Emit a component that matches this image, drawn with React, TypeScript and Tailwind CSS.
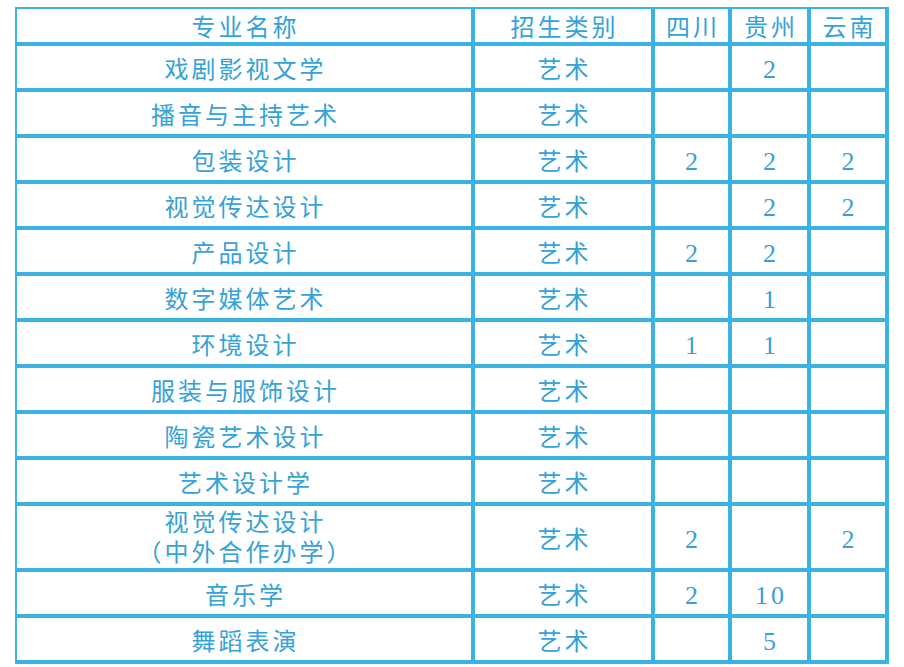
import React from 'react';

type Row = {
  name: string[];
  sc?: string;
  gz?: string;
  yn?: string;
  tall?: boolean;
};

const rows: Row[] = [
  { name: ['戏剧影视文学'], gz: '2' },
  { name: ['播音与主持艺术'] },
  { name: ['包装设计'], sc: '2', gz: '2', yn: '2' },
  { name: ['视觉传达设计'], gz: '2', yn: '2' },
  { name: ['产品设计'], sc: '2', gz: '2' },
  { name: ['数字媒体艺术'], gz: '1' },
  { name: ['环境设计'], sc: '1', gz: '1' },
  { name: ['服装与服饰设计'] },
  { name: ['陶瓷艺术设计'] },
  { name: ['艺术设计学'] },
  { name: ['视觉传达设计', '（中外合作办学）'], sc: '2', yn: '2', tall: true },
  { name: ['音乐学'], sc: '2', gz: '10' },
  { name: ['舞蹈表演'], gz: '5' },
];

const base = 'border-r-4 border-b-4 border-[#3ab2e4] text-center align-middle pb-0 pl-[3px] pr-0';
const cell = base + ' pt-[5px]';

const App = () => {
  return (
    <div className="bg-white w-[904px] h-[667px] pt-[7px] pl-[15px] font-['Liberation_Serif','Noto_Sans_CJK_SC',serif] text-[#35a2d8] text-[24px] tracking-[3px]">
      <table className="border-separate border-spacing-0 border-l-2 border-t-2 border-[#3ab2e4] table-fixed">
        <colgroup>
          <col className="w-[458px]" />
          <col className="w-[180px]" />
          <col className="w-[77px]" />
          <col className="w-[79px]" />
          <col className="w-[78px]" />
        </colgroup>
        <thead>
          <tr className="h-[37px]">
            <th className={cell + ' font-normal leading-none'}>专业名称</th>
            <th className={cell + ' font-normal leading-none'}>招生类别</th>
            <th className={cell + ' font-normal leading-none'}>四川</th>
            <th className={cell + ' font-normal leading-none'}>贵州</th>
            <th className={cell + ' font-normal leading-none'}>云南</th>
          </tr>
        </thead>
        <tbody>
          {rows.map((r, i) => (
            <tr key={i} className={r.tall ? 'h-[66px]' : 'h-[46px]'}>
              <td className={r.tall ? base + ' pt-[2px] leading-[30px]' : cell + ' leading-none'}>
                {r.name.map((line, j) => (
                  <div key={j}>{line}</div>
                ))}
              </td>
              <td className={cell + ' leading-none'}>艺术</td>
              <td className={cell + ' leading-none text-[26px]'}>{r.sc}</td>
              <td className={cell + ' leading-none text-[26px]'}>{r.gz}</td>
              <td className={cell + ' leading-none text-[26px]'}>{r.yn}</td>
            </tr>
          ))}
        </tbody>
      </table>
    </div>
  );
};

export default App;
